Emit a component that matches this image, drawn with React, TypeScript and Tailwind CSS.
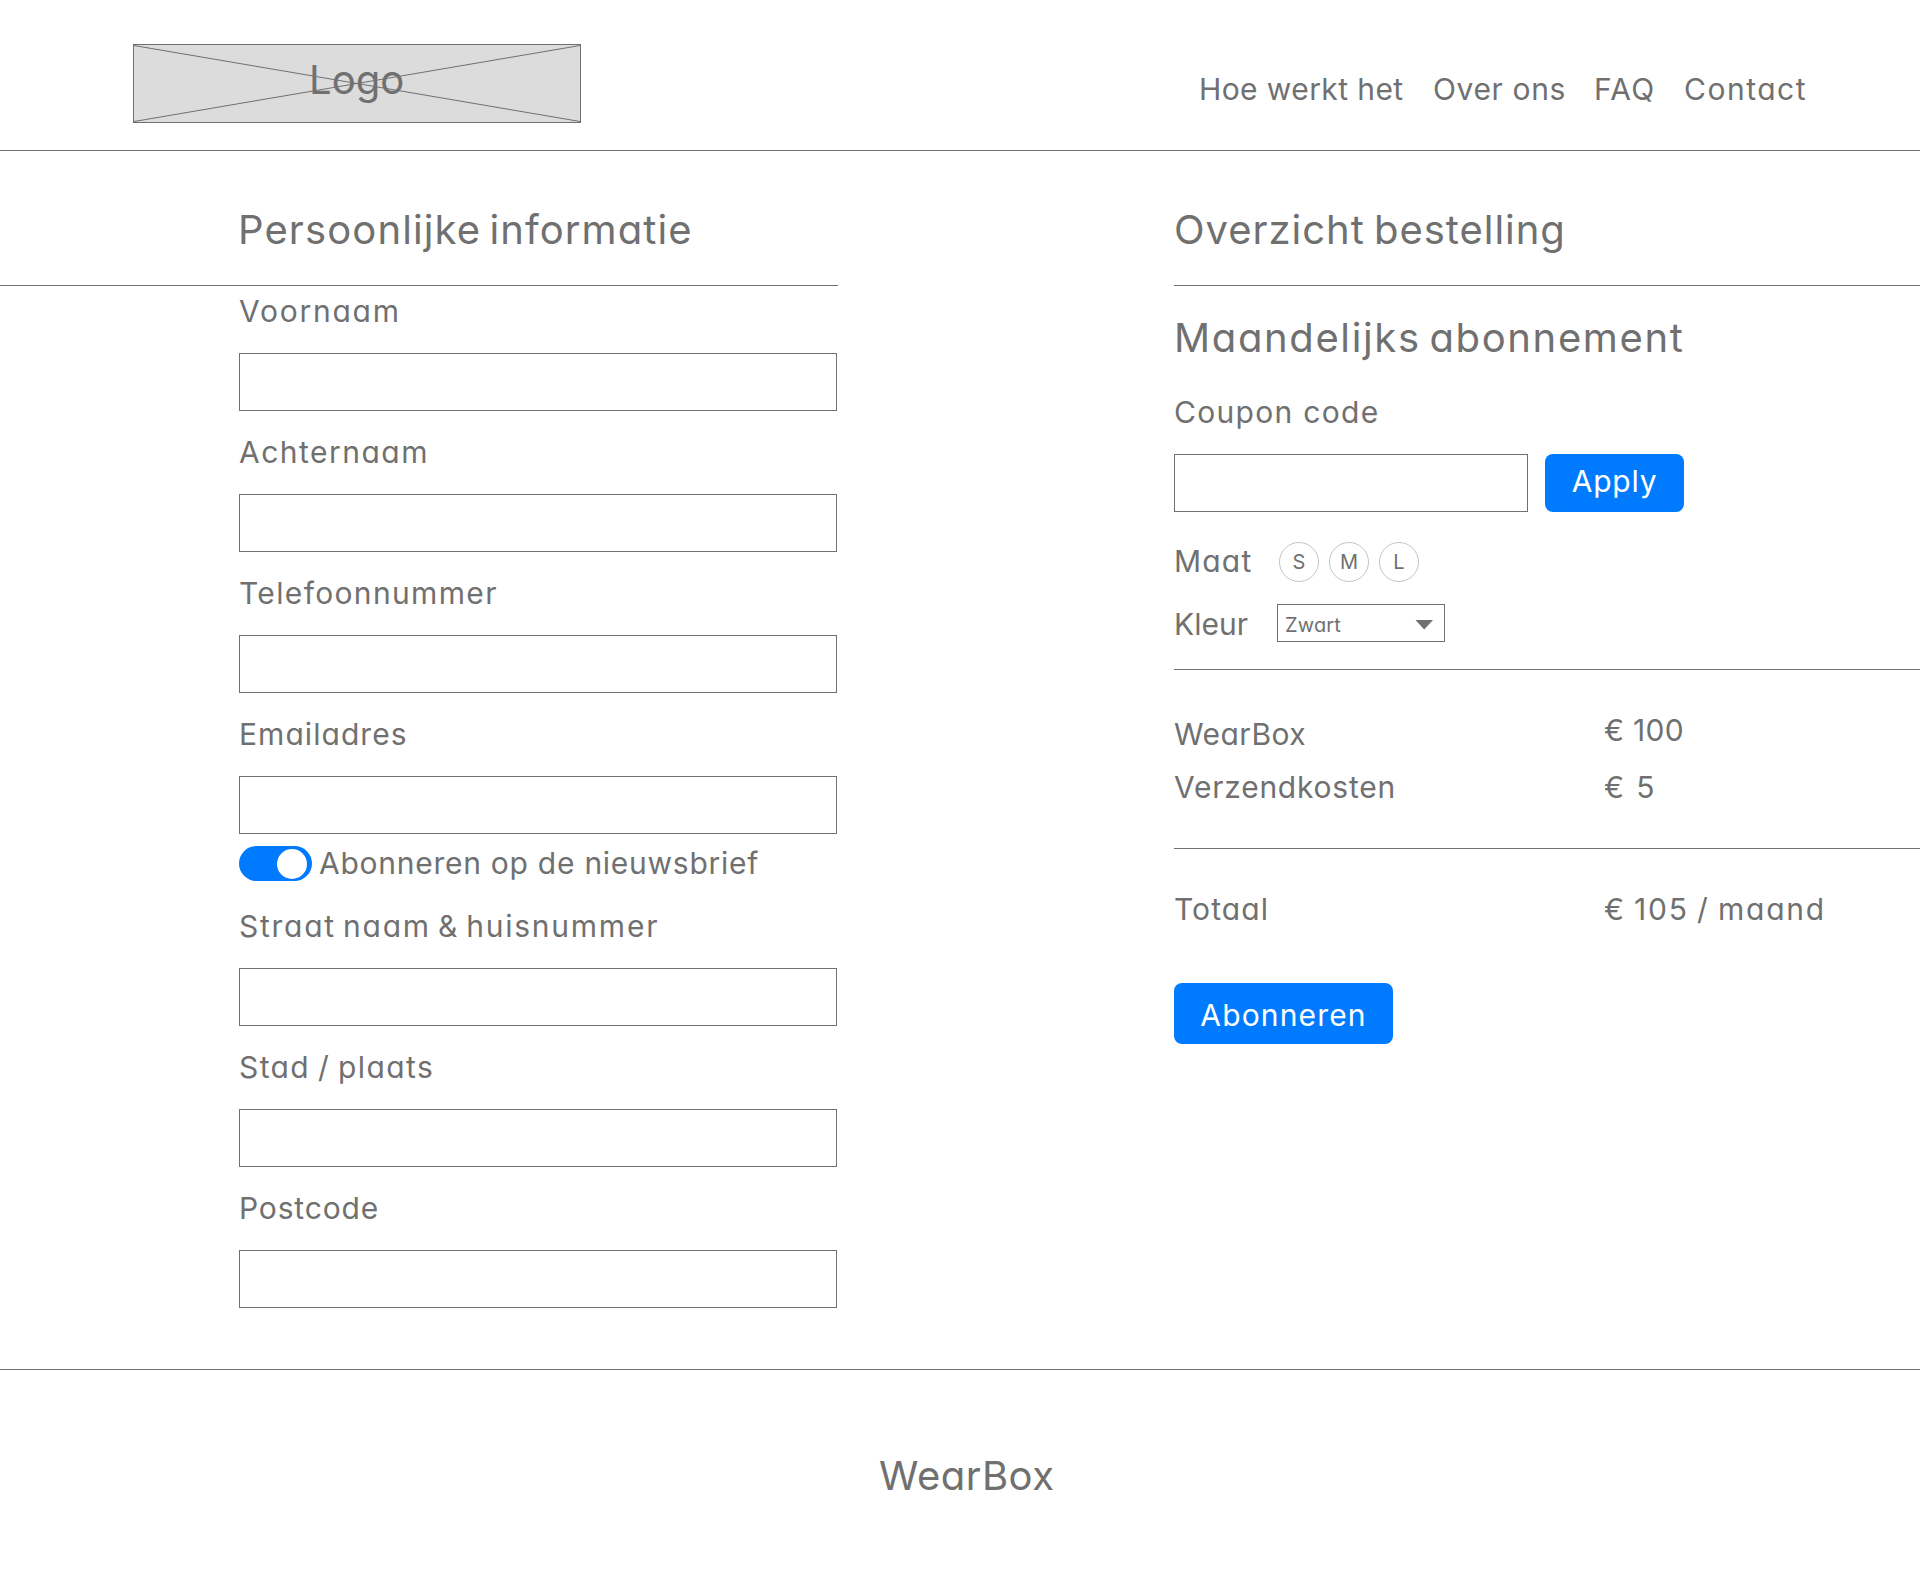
const body = "text-[30px] leading-[40px] whitespace-nowrap";
const title = "text-[40px] leading-[48px] whitespace-nowrap font-normal";

function Field({ label, tracking }: { label: string; tracking: string }) {
  return (
    <label className="flex flex-col gap-[22px]">
      <span className={`${body} ${tracking}`}>{label}</span>
      <input className="h-[58px] w-[598px] border border-[#707070] bg-white px-3 text-2xl outline-none" />
    </label>
  );
}

function Header() {
  return (
    <header className="flex h-[151px] items-start justify-between border-b border-[#707070] pr-[100px] pl-[133px]">
      <div className="relative mt-[44px] h-[79px] w-[448px] border border-[#707070] bg-[#dcdcdc]">
        <svg className="absolute inset-0" width="446" height="77" viewBox="0 0 446 77" stroke="#707070" strokeWidth="1">
          <path d="M0 .5L446 76.5M0 76.5L446 .5" />
        </svg>
        <div className="relative pt-[11px] pl-[175px] text-[40px] leading-[48px] tracking-[0.08px]">Logo</div>
      </div>
      <nav className={`mt-[69px] grid w-[621px] grid-cols-[234px_161px_90px_auto] ${body}`}>
        <a className="tracking-[0.41px]">Hoe werkt het</a>
        <a className="tracking-[0.62px]">Over ons</a>
        <a className="tracking-[1.28px]">FAQ</a>
        <a className="tracking-[1.5px]">Contact</a>
      </nav>
    </header>
  );
}

function PersonalInfo() {
  return (
    <section className="w-[838px]">
      <div className="border-b border-[#707070] pt-[55px] pb-[31px] pl-[238px]">
        <h2 className={`${title} tracking-[1.1px] [word-spacing:-4px]`}>Persoonlijke informatie</h2>
      </div>
      <form className="flex flex-col pt-[5px] pl-[239px]">
        <div className="flex flex-col gap-[21px]">
          <Field label="Voornaam" tracking="tracking-[1.75px]" />
          <Field label="Achternaam" tracking="tracking-[1.48px]" />
          <Field label="Telefoonnummer" tracking="tracking-[1.34px]" />
          <Field label="Emailadres" tracking="tracking-[1.05px]" />
        </div>
        <div className="mt-[9px] mb-[23px] flex items-start gap-[7px]">
          <span className="mt-[3px] flex h-[35px] w-[73px] items-center justify-end rounded-full bg-[#007bff] pr-[5px]">
            <span className="size-[30px] rounded-full bg-white" />
          </span>
          <span className={`${body} tracking-[0.74px]`}>Abonneren op de nieuwsbrief</span>
        </div>
        <div className="flex flex-col gap-[21px]">
          <Field label="Straat naam & huisnummer" tracking="tracking-[1.75px] [word-spacing:-3px]" />
          <Field label="Stad / plaats" tracking="tracking-[1.4px] [word-spacing:-2px]" />
          <Field label="Postcode" tracking="tracking-[0.85px]" />
        </div>
      </form>
    </section>
  );
}

function OrderSummary() {
  return (
    <section className="w-[746px]">
      <div className="border-b border-[#707070] pt-[55px] pb-[31px]">
        <h2 className={`${title} tracking-[0.97px] [word-spacing:-3px]`}>Overzicht bestelling</h2>
      </div>
      <h3 className={`${title} mt-[28px] tracking-[1.63px] [word-spacing:-4px]`}>Maandelijks abonnement</h3>
      <div className={`${body} mt-[30px] tracking-[1.3px]`}>Coupon code</div>
      <div className="mt-[22px] flex gap-[17px]">
        <input className="h-[58px] w-[354px] border border-[#707070] bg-white px-3 text-2xl outline-none" />
        <button className={`flex h-[58px] w-[139px] justify-center rounded-lg bg-[#007bff] pt-[7px] text-white tracking-[0.8px] ${body}`}>
          Apply
        </button>
      </div>
      <div className="mt-[29px] flex h-[41px]">
        <span className={`${body} w-[105px] tracking-[1.2px]`}>Maat</span>
        <div className="mt-px flex gap-[10px]">
          {["S", "M", "L"].map((size) => (
            <span key={size} className="flex size-[40px] justify-center rounded-full border border-[#c4c4c4] pt-[7px] text-[20px] leading-[24px]">
              {size}
            </span>
          ))}
        </div>
      </div>
      <div className="mt-[22px] flex h-[40px]">
        <span className={`${body} w-[103px]`}>Kleur</span>
        <div className="flex h-[38px] w-[168px] justify-between border border-[#707070] pt-[8px] pr-[11px] pl-[7px] text-[20px] leading-[24px] tracking-[0.16px]">
          Zwart
          <svg className="mt-[7px]" width="18" height="10" viewBox="0 0 18 10" fill="#707070">
            <path d="M.5 0H18L9.2 9.5Z" />
          </svg>
        </div>
      </div>
      <div className="mt-[25px] h-px bg-[#707070]" />
      <div className={`grid grid-cols-[430px_auto] pt-[40px] ${body}`}>
        <span className="mt-[4px] tracking-[0.45px]">WearBox</span>
        <span className="tracking-[0.3px]">€ 100</span>
        <span className="mt-[13px] tracking-[0.76px]">Verzendkosten</span>
        <span className="mt-[13px] tracking-[1.9px]">€ 5</span>
      </div>
      <div className="mt-[41px] h-px bg-[#707070]" />
      <div className={`grid grid-cols-[430px_auto] pt-[40px] ${body}`}>
        <span className="tracking-[1.1px]">Totaal</span>
        <span className="tracking-[1.8px] [word-spacing:-2px]">€ 105 / maand</span>
      </div>
      <button className={`mt-[54px] flex h-[61px] w-[219px] justify-center rounded-lg bg-[#007bff] pt-[12px] text-white tracking-[1.14px] ${body}`}>
        Abonneren
      </button>
    </section>
  );
}

export default function App() {
  return (
    <div className="h-[1570px] w-[1920px] overflow-hidden bg-white font-['Inter',sans-serif] text-[#707070] [font-feature-settings:'cv11']">
      <Header />
      <main className="flex justify-between">
        <PersonalInfo />
        <OrderSummary />
      </main>
      <footer className="mt-[61px] border-t border-[#707070] pt-[82px] pl-[879px]">
        <div className={`${title} tracking-[0.5px]`}>WearBox</div>
      </footer>
    </div>
  );
}
